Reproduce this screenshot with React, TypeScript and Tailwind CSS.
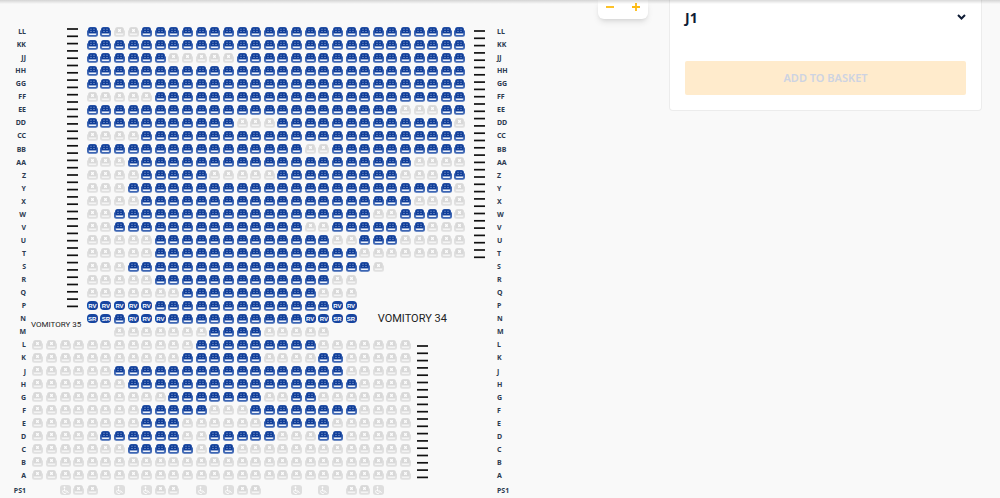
// seat codes: o = available, x = taken, R = restricted view, S = severely restricted, w = wheelchair, . = no seat
const ROWS = [
  { name: "LL", seats: "4. 2o 2x 24o" },
  { name: "KK", seats: "4. 28o" },
  { name: "JJ", seats: "4. 6o 5x 17o" },
  { name: "HH", seats: "4. 28o" },
  { name: "GG", seats: "4. 28o" },
  { name: "FF", seats: "4. 5x 23o" },
  { name: "EE", seats: "4. 23o 3x 2o" },
  { name: "DD", seats: "4. 11o 3x 13o 1x" },
  { name: "CC", seats: "4. 4x 24o" },
  { name: "BB", seats: "4. 16o 2x 10o" },
  { name: "AA", seats: "4. 3x 21o 4x" },
  { name: "Z", seats: "4. 4x 5o 5x 9o 3x 2o" },
  { name: "Y", seats: "4. 3x 24o 1x" },
  { name: "X", seats: "4. 4x 20o 4x" },
  { name: "W", seats: "4. 2x 19o 2x 4o 1x" },
  { name: "V", seats: "4. 2x 14o 2x 7o 3x" },
  { name: "U", seats: "4. 5x 13o 2x 3o 5x" },
  { name: "T", seats: "4. 5x 15o 8x" },
  { name: "S", seats: "4. 3x 18o 1x" },
  { name: "R", seats: "4. 5x 13o 2x" },
  { name: "Q", seats: "4. 7x 10o 3x" },
  { name: "P", seats: "4. 5R 13o 2R" },
  { name: "N", seats: "4. 2S 1o 3R 10o 2R 2S" },
  { name: "M", seats: "6. 7x 4o 5x" },
  { name: "L", seats: "12x 9o 7x" },
  { name: "K", seats: "11x 6o 4x 2o 5x" },
  { name: "J", seats: "6x 17o 5x" },
  { name: "H", seats: "7x 17o 4x" },
  { name: "G", seats: "10x 7o 2x 2o 7x" },
  { name: "F", seats: "8x 5o 3x 8o 4x" },
  { name: "E", seats: "8x 3o 6x 5o 6x" },
  { name: "D", seats: "5x 6o 2x 5o 3x 2o 5x" },
  { name: "C", seats: "7x 5o 1x 2o 13x" },
  { name: "B", seats: "28x" },
  { name: "A", seats: "28x" },
  { name: "PS1", seats: "2. 1w 2x 1. 1w 1. 1w 2x 1. 1w 1. 1w 2x 2. 1w 1. 1w 1. 2x 1w" },
];

const SEAT_LABELS: Record<string, string> = {
  o: "available",
  x: "unavailable",
  R: "restricted view",
  S: "severely restricted view",
  w: "wheelchair space, unavailable",
};

const expand = (runs: string) =>
  runs
    .split(" ")
    .map((run) => run.slice(-1).repeat(parseInt(run)))
    .join("")
    .split("");

function SeatIcon({ type }: { type: string }) {
  if (type === "w") {
    return (
      <svg viewBox="0 0 22 20" className="h-[10px] w-[11px]">
        <rect width="22" height="20" rx="6" fill="#dedede" />
        <circle cx="9" cy="4.500" r="1.800" fill="#fff" />
        <path d="M9 7v5h5l3 4M7 10a4 4 0 1 0 6 5" fill="none" stroke="#fff" strokeWidth="1.800" />
      </svg>
    );
  }
  const taken = type === "x";
  return (
    <svg viewBox="0 0 22 20" className="h-[10px] w-[11px]">
      <path
        d="M7 0h8a5 5 0 0 1 5 5v1a3 3 0 0 1 2 3v6a4.500 4.500 0 0 1-4.500 4.500h-13A4.500 4.500 0 0 1 0 15V9a3 3 0 0 1 2-3V5a5 5 0 0 1 5-5z"
        fill={taken ? "#e0e0e0" : "#3c65b3"}
      />
      <path d="M7 1h8a4 4 0 0 1 4 4v8H3V5a4 4 0 0 1 4-4z" fill={taken ? "#d8d8d8" : "#0f3d98"} />
      <path d="M3.500 13h15v1a2 2 0 0 1-2 2h-11a2 2 0 0 1-2-2z" fill={taken ? "#f4f4f4" : "#eef2fa"} />
      {taken ? (
        <path d="M8.500 4.500l5 5M13.500 4.500l-5 5" stroke="#fff" strokeWidth="2.400" />
      ) : (
        <path d="M8 3.500v2M8 8v2M14 3.500v2M14 8v2" stroke="#b4c4e4" strokeWidth="1.800" />
      )}
    </svg>
  );
}

function Seat({ row, number, type }: { row: string; number: number; type: string }) {
  const restricted = type === "R" || type === "S";
  return (
    <button
      type="button"
      aria-label={`Row ${row} seat ${number}, ${SEAT_LABELS[type]}`}
      disabled={type === "x" || type === "w"}
      className="flex items-center justify-center">
      {restricted ? (
        <span className="flex h-[9px] w-[11px] items-center justify-center rounded-[4px] bg-[#1745a0] font-['Liberation_Sans',sans-serif] text-[6px] leading-none font-bold text-white">
          {type}
          {type === "R" ? "V" : "R"}
        </span>
      ) : (
        <SeatIcon type={type} />
      )}
    </button>
  );
}

// flight of steps between two blocks
function Stairs({ steps }: { steps: number }) {
  const height = Math.round(steps * 7.3);
  return (
    <svg width="11" height={height} viewBox={`0 0 11 ${height}`} aria-hidden="true">
      {Array.from({ length: steps }, (_, i) => (
        <path key={i} d={`M0 ${1 + i * 7.3}h11`} stroke="#111" strokeWidth="1.700" />
      ))}
    </svg>
  );
}

function SeatMap() {
  return (
    <div className="grid h-[473px] w-[525px] grid-cols-[26px_5px_repeat(34,minmax(0,1fr))_3px_28px] grid-rows-[repeat(35,minmax(0,1fr))_16px] text-[7px] leading-none font-bold text-[#2c3a50]">
      {ROWS.map((row, r) => (
        <div key={row.name} className="contents">
          <span className="flex items-center justify-end" style={{ gridRow: r + 1, gridColumn: 1 }}>
            {row.name}
          </span>
          {expand(row.seats).map((type, c) =>
            type === "." ? null : (
              <div key={c} className="flex items-center justify-center" style={{ gridRow: r + 1, gridColumn: c + 3 }}>
                <Seat row={row.name} number={c + 1} type={type} />
              </div>
            )
          )}
          <span className="flex items-center" style={{ gridRow: r + 1, gridColumn: 38 }}>
            {row.name}
          </span>
        </div>
      ))}

      <div className="col-span-2 col-start-5 row-span-22 row-start-1 flex justify-center pt-[3px] pl-[2px]">
        <Stairs steps={39} />
      </div>
      <div className="col-span-2 col-start-35 row-span-18 row-start-1 flex justify-center pt-[5px] pr-[2px]">
        <Stairs steps={32} />
      </div>
      <div className="col-span-2 col-start-31 row-span-11 row-start-25 flex pt-[7px] pl-[5px]">
        <Stairs steps={19} />
      </div>

      <p className="col-span-4 col-start-3 row-span-2 row-start-23 flex items-center font-['Roboto',sans-serif] text-[8px] font-normal whitespace-nowrap text-[#222]">
        VOMITORY 35
      </p>
      <p className="col-span-6 col-start-28 row-start-23 flex items-center justify-center font-['Roboto',sans-serif] text-[11px] font-normal whitespace-nowrap text-[#222]">
        VOMITORY 34
      </p>
    </div>
  );
}

export default function App() {
  return (
    <div className="relative min-h-screen overflow-hidden bg-[#f9f9f9] font-['Noto_Sans',sans-serif] text-[#0f1c35]">
      <div className="absolute inset-x-0 top-0 z-10 h-1 bg-linear-to-b from-black/15 to-transparent" />

      <main className="flex items-start gap-[21px] pr-[18px]">
        <section aria-label="Seat map" className="relative min-w-0 flex-1 pt-[25px]">
          <SeatMap />
          <div className="absolute top-0 right-0 flex h-[19px] w-[50px] justify-between rounded-b-md bg-white px-2 pb-2 text-[#fdbb11] shadow-md">
            <button type="button" aria-label="Zoom out" className="flex items-end">
              <svg viewBox="0 0 8 8" className="size-2">
                <path d="M0 4h8" stroke="currentColor" strokeWidth="1.800" />
              </svg>
            </button>
            <button type="button" aria-label="Zoom in" className="flex items-end">
              <svg viewBox="0 0 8 8" className="size-2">
                <path d="M0 4h8M4 0v8" stroke="currentColor" strokeWidth="1.800" />
              </svg>
            </button>
          </div>
        </section>

        <aside className="w-[313px] shrink-0 rounded-b-sm border border-t-0 border-[#ececec] bg-white px-[15px] pb-[15px]">
          <button type="button" aria-expanded="false" className="flex h-[34px] w-full items-center justify-between text-[14px] font-bold">
            J1
            <svg viewBox="0 0 9 6" className="h-[6px] w-[9px]">
              <path d="M1 1l3.500 3.500L8 1" fill="none" stroke="currentColor" strokeWidth="2" />
            </svg>
          </button>
          <button type="button" disabled className="mt-[27px] h-[34px] w-full rounded-xs bg-[#ffebcc] text-[11px] font-semibold text-[#cdd3e2]">
            ADD TO BASKET
          </button>
        </aside>
      </main>
    </div>
  );
}
